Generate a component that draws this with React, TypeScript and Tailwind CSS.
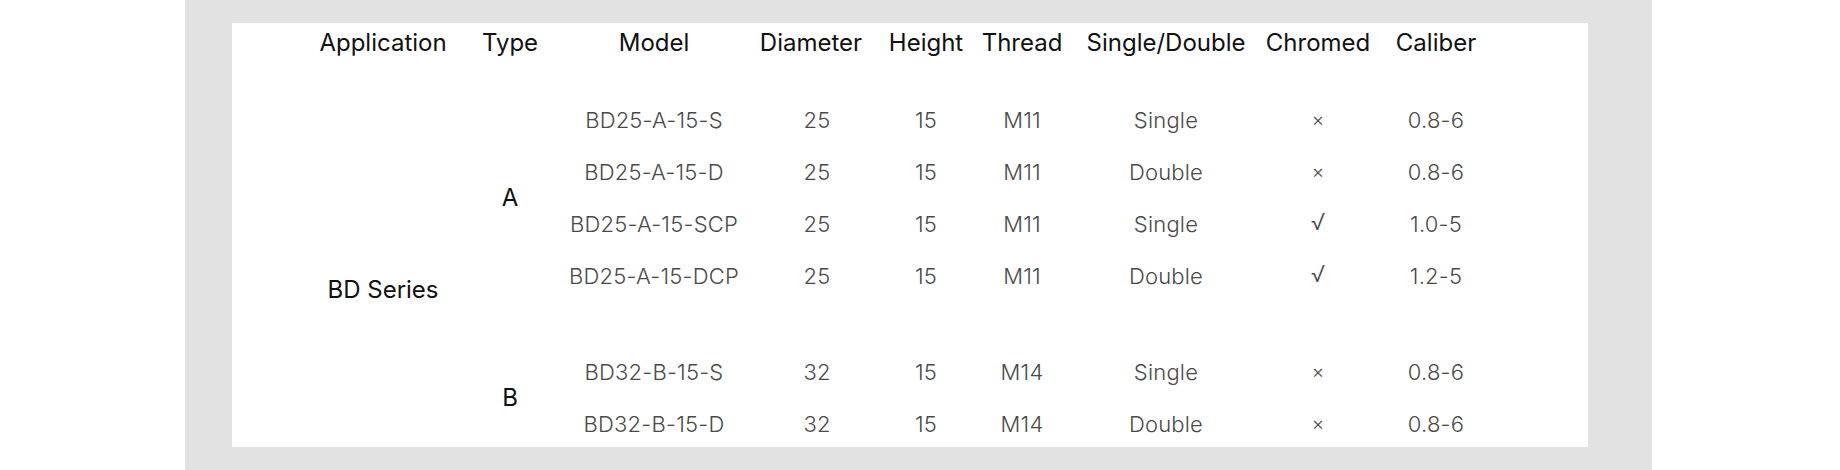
const headers = [
  "Application",
  "Type",
  "Model",
  "Diameter",
  "Height",
  "Thread",
  "Single/Double",
  "Chromed",
  "Caliber",
];

type Row = {
  model: string;
  diameter: string;
  height: string;
  thread: string;
  sides: string;
  chromed: string;
  caliber: string;
};

const groupA: Row[] = [
  { model: "BD25-A-15-S", diameter: "25", height: "15", thread: "M11", sides: "Single", chromed: "×", caliber: "0.8-6" },
  { model: "BD25-A-15-D", diameter: "25", height: "15", thread: "M11", sides: "Double", chromed: "×", caliber: "0.8-6" },
  { model: "BD25-A-15-SCP", diameter: "25", height: "15", thread: "M11", sides: "Single", chromed: "√", caliber: "1.0-5" },
  { model: "BD25-A-15-DCP", diameter: "25", height: "15", thread: "M11", sides: "Double", chromed: "√", caliber: "1.2-5" },
];

const groupB: Row[] = [
  { model: "BD32-B-15-S", diameter: "32", height: "15", thread: "M14", sides: "Single", chromed: "×", caliber: "0.8-6" },
  { model: "BD32-B-15-D", diameter: "32", height: "15", thread: "M14", sides: "Double", chromed: "×", caliber: "0.8-6" },
];

const cell = "flex items-center justify-center whitespace-nowrap";
const headCell = `${cell} text-[24px] text-[#111]`;
const dataCell = `${cell} text-[22px] font-light text-[#4a4a4a] tracking-[0.2px]`;

function DataRow({ row }: { row: Row }) {
  const tick = row.chromed === "√";
  return (
    <>
      <div className={dataCell}>{row.model}</div>
      <div className={dataCell}>{row.diameter}</div>
      <div className={dataCell}>{row.height}</div>
      <div className={dataCell}>{row.thread}</div>
      <div className={dataCell}>{row.sides}</div>
      <div
        className={`${cell} font-light text-[#4a4a4a] ${
          tick ? "text-[23px] pb-[3px]" : "text-[19px]"
        }`}>
        {row.chromed}
      </div>
      <div className={dataCell}>{row.caliber}</div>
    </>
  );
}

export default function App() {
  return (
    <div className="w-[1840px] h-[470px] bg-white flex font-['Inter',sans-serif]">
      <div className="ml-[185px] w-[1467px] h-full bg-[#e2e2e2] pt-[23px] pl-[47px]">
        <div className="w-[1356px] h-[424px] bg-white pl-[88px] overflow-hidden">
          <div className="grid grid-cols-[126px_128px_160px_166px_52px_140px_148px_156px_80px] grid-rows-[39px_32px_52px_52px_52px_52px_44px_52px_52px]">
            {/* header */}
            {headers.map((h) => (
              <div
                key={h}
                className={`${headCell} ${h === "Diameter" ? "pr-[12px]" : ""}`}>
                {h}
              </div>
            ))}

            {/* spacer row */}
            <div className="col-span-9" />

            {/* application column */}
            <div className={`${headCell} col-start-1 row-start-3 row-span-7 pt-[36px]`}>
              BD Series
            </div>

            {/* type A */}
            <div className={`${headCell} col-start-2 row-start-3 row-span-4`}>A</div>
            <div className="col-start-3 col-span-7 row-start-3 row-span-4 grid grid-cols-[160px_166px_52px_140px_148px_156px_80px] grid-rows-[52px_52px_52px_52px]">
              {groupA.map((r) => (
                <DataRow key={r.model} row={r} />
              ))}
            </div>

            {/* type B */}
            <div className={`${headCell} col-start-2 row-start-8 row-span-2`}>B</div>
            <div className="col-start-3 col-span-7 row-start-8 row-span-2 grid grid-cols-[160px_166px_52px_140px_148px_156px_80px] grid-rows-[52px_52px]">
              {groupB.map((r) => (
                <DataRow key={r.model} row={r} />
              ))}
            </div>
          </div>
        </div>
      </div>
    </div>
  );
}
